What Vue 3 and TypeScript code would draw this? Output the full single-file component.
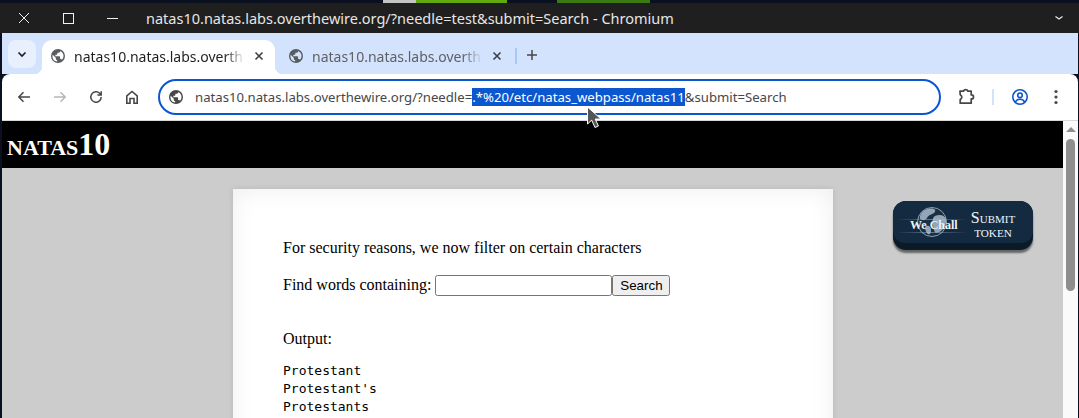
<template>
  <div class="screen">
    <div class="wall-grey"></div>
    <div class="wall-green"></div>
    <div class="wall-green-dark"></div>
    <div class="titlebar">
      <div class="win-buttons">
        <svg width="16" height="16" viewBox="0 0 16 16"><path d="M3 3l10 10M13 3L3 13" stroke="#f2f2f2" stroke-width="1" fill="none" /></svg>
        <svg width="16" height="16" viewBox="0 0 16 16"><rect x="3.500" y="3.500" width="10" height="10" stroke="#f2f2f2" stroke-width="1" fill="none" /></svg>
        <svg width="16" height="16" viewBox="0 0 16 16"><path d="M3 8.500h11" stroke="#f2f2f2" stroke-width="1" fill="none" /></svg>
      </div>
      <div class="win-title">natas10.natas.labs.overthewire.org/?needle=test&amp;submit=Search - Chromium</div>
      <svg class="win-chevron" width="12" height="12" viewBox="0 0 12 12"><path d="M2.500 4.500L6 7l3.500-2.500" stroke="#e8e8e8" stroke-width="1.300" fill="none" /></svg>
    </div>

    <div class="tabstrip">
      <div class="tab-menu">
        <svg width="12" height="12" viewBox="0 0 12 12"><path d="M2.500 4.500L6 8l3.500-3.500" stroke="#1f1f1f" stroke-width="1.700" fill="none" /></svg>
      </div>
      <div
        v-for="(tab, index) in tabs"
        :key="index"
        class="tab"
        :class="{ active: tab.active }"
      >
        <svg class="globe" width="14" height="14" viewBox="0 0 16 16"><path :d="globePath" fill="#5a5c60" /></svg>
        <span class="tab-text">{{ tab.title }}</span>
        <svg class="tab-close" width="10" height="10" viewBox="0 0 10 10"><path d="M1.500 1.500l7 7M8.500 1.500l-7 7" stroke="#3c4043" stroke-width="1.600" fill="none" /></svg>
      </div>
      <div class="tab-sep"></div>
      <svg class="tab-plus" width="12" height="12" viewBox="0 0 12 12"><path d="M6 1v10M1 6h10" stroke="#474747" stroke-width="1.500" fill="none" /></svg>
    </div>

    <div class="toolbar">
      <div class="nav-icons">
        <svg width="16" height="16" viewBox="0 0 16 16"><path d="M14 8H3M7.500 3.200L2.800 8l4.700 4.800" stroke="#474747" stroke-width="1.500" fill="none" /></svg>
        <svg width="16" height="16" viewBox="0 0 16 16"><path d="M2 8h11M8.500 3.200L13.200 8l-4.700 4.800" stroke="#b4b6ba" stroke-width="1.500" fill="none" /></svg>
        <svg width="16" height="16" viewBox="0 0 16 16"><path d="M13.200 8a5.200 5.200 0 1 1-1.500-3.700L13.200 6M13.200 2.200V6H9.400" stroke="#474747" stroke-width="1.500" fill="none" /></svg>
        <svg width="16" height="16" viewBox="0 0 16 16"><path d="M2.800 14.200V6.800L8 2.500l5.200 4.300v7.400H10V9.500H6v4.700z" stroke="#474747" stroke-width="1.600" fill="none" /></svg>
      </div>
      <div class="omnibox">
        <svg class="globe" width="14" height="14" viewBox="0 0 16 16"><path :d="globePath" fill="#474747" /></svg>
        <span class="url">natas10.natas.labs.overthewire.org/?needle=<span class="url-selected">.*%20/etc/natas_webpass/natas11</span>&amp;submit=Search</span>
      </div>
      <div class="tool-icons">
        <svg width="18" height="18" viewBox="0 0 18 18"><path d="M3 3.200h3.500a2.300 2.300 0 0 1 4.400 0h3.300v3.700h.3a2 2 0 0 1 0 4h-.3v4.300H3.200v-3.700a2.600 2.600 0 0 0 0-4.800z" stroke="#474747" stroke-width="1.700" fill="none" stroke-linejoin="round" /></svg>
        <div class="tool-sep"></div>
        <svg width="18" height="18" viewBox="0 0 18 18"><circle cx="9" cy="9" r="7.200" stroke="#0b57d0" stroke-width="1.600" fill="none" /><circle cx="9" cy="7.300" r="2.300" stroke="#0b57d0" stroke-width="1.600" fill="none" /><path d="M4.500 14c1-2.400 2.800-2.800 4.500-2.800s3.500.4 4.500 2.800" stroke="#0b57d0" stroke-width="1.600" fill="none" /></svg>
        <svg width="14" height="16" viewBox="0 0 14 16"><circle cx="7" cy="2.500" r="1.600" fill="#474747" /><circle cx="7" cy="8" r="1.600" fill="#474747" /><circle cx="7" cy="13.500" r="1.600" fill="#474747" /></svg>
      </div>
    </div>

    <div class="viewport">
      <div class="page">
        <div class="page-head">
          <h1 class="natas-title">natas<span class="natas-num">10</span></h1>
        </div>
        <div class="page-body">
          <div class="content">
            <p class="line">For security reasons, we now filter on certain characters</p>
            <div class="form-row">
              <span>Find words containing:</span>
              <span class="fake-input"></span><span class="fake-button">Search</span>
            </div>
            <p class="line output">Output:</p>
            <pre class="words">{{ words.join('\n') }}</pre>
          </div>
          <div class="wechall">
            <div class="wechall-face">
              <div class="wechall-logo">
                <svg class="wechall-globe" width="32" height="32" viewBox="0 0 32 32">
                  <circle cx="16" cy="16" r="14.500" fill="#1d3247" stroke="#b4c3d0" stroke-width="0.900" />
                  <path d="M9 4c4-2 9-2 10 0s-2 4-5 5-3 5-6 5-5-1-4-4 2-4 5-6zM19 10c4-2 10-1 11 3s-2 10-5 12-6 3-7-1-3-12 1-14zM10 20c3-1 5 1 5 4s-1 5-3 4-4-7-2-8z" fill="#a9bccd" />
                </svg>
                <div class="streak streak-a"></div>
                <div class="streak streak-b"></div>
                <span class="wechall-name">We Chall</span>
              </div>
              <div class="wechall-action">
                <span class="action-top">Submit</span>
                <span class="action-bottom">token</span>
              </div>
            </div>
          </div>
        </div>
      </div>
      <div class="scrollbar">
        <div class="scroll-arrow"></div>
        <div class="scroll-thumb"></div>
      </div>
    </div>

    <svg class="cursor" width="16" height="23" viewBox="0 0 16 23">
      <path d="M1.500 1v17l4.200-3.800 3.300 7.300 3.400-1.500-3.200-7h5.800z" fill="#555" stroke="#fff" stroke-width="1" />
    </svg>
  </div>
</template>

<script setup lang="ts">
interface Tab {
  title: string
  active: boolean
}

const tabs: Tab[] = [
  { title: 'natas10.natas.labs.overth', active: true },
  { title: 'natas10.natas.labs.overth', active: false }
]

const words: string[] = ['Protestant', "Protestant's", 'Protestants']

const globePath =
  'M8 0a8 8 0 1 0 0 16A8 8 0 0 0 8 0zM1.700 8c0-.5.100-1 .200-1.500L5.500 10v1c0 .8.700 1.500 1.500 1.500v1.900A6.300 6.300 0 0 1 1.700 8zm10.900 4.300c-.2-.6-.8-1-1.400-1h-.8V9c0-.4-.4-.8-.8-.8H5v-1.600h1.500c.4 0 .8-.4.800-.8V4.200h1.600c.9 0 1.600-.7 1.600-1.600v-.4a6.300 6.300 0 0 1 2.100 10.100z'
</script>

<style scoped>
.screen {
  position: relative;
  width: 1079px;
  height: 418px;
  overflow: hidden;
  background: #0b1020;
  font-family: "Noto Sans", sans-serif;
  padding: 3px 1px 0 2px;
  box-sizing: border-box;
}

.wall-grey {
  position: absolute;
  top: 0;
  left: 383px;
  width: 33px;
  height: 3px;
  background: #c4c4c4;
}

.wall-green {
  position: absolute;
  top: 0;
  left: 416px;
  width: 91px;
  height: 3px;
  background: #62a90f;
}

.wall-green-dark {
  position: absolute;
  top: 0;
  left: 557px;
  width: 93px;
  height: 3px;
  background: #3a7a10;
}

.titlebar {
  display: flex;
  align-items: center;
  height: 30px;
  margin-left: -2px;
  margin-right: -1px;
  background: #1f1f1f;
  color: #e6e6e6;
  padding: 0 14px 0 16px;
}

.win-buttons {
  display: flex;
  gap: 28px;
  width: 130px;
  flex: none;
}

.win-title {
  flex: 1;
  font-size: 14.500px;
  white-space: nowrap;
}

.tabstrip {
  display: flex;
  align-items: flex-end;
  height: 41px;
  background: #d3e3fd;
  padding-left: 6px;
  box-sizing: border-box;
}

.tab-menu {
  display: flex;
  align-items: center;
  justify-content: center;
  width: 28px;
  height: 28px;
  margin: 0 6px 6px 0;
  background: #e9f0fd;
  border-radius: 8px;
}

.tab {
  position: relative;
  display: flex;
  align-items: center;
  width: 233px;
  height: 34px;
  box-sizing: border-box;
  padding: 0 11px 2px 9px;
  border-radius: 10px 10px 0 0;
  margin-right: 5px;
  color: #5f6163;
  font-size: 14px;
}

.tab.active {
  background: #fff;
  color: #1f1f1f;
}

.tab.active::before,
.tab.active::after {
  content: "";
  position: absolute;
  bottom: 0;
  width: 8px;
  height: 8px;
}

.tab.active::before {
  left: -8px;
  background: radial-gradient(circle at 0 0, transparent 8px, #fff 8.500px);
}

.tab.active::after {
  right: -8px;
  background: radial-gradient(circle at 100% 0, transparent 8px, #fff 8.500px);
}

.tab-text {
  flex: 1;
  margin-left: 9px;
  overflow: hidden;
  white-space: nowrap;
  -webkit-mask-image: linear-gradient(to right, #000 88%, transparent);
  mask-image: linear-gradient(to right, #000 88%, transparent);
}

.tab-close {
  margin-left: 9px;
  flex: none;
}

.tab-sep {
  width: 2px;
  height: 16px;
  background: #a8c7fa;
  margin: 0 0 10px -3px;
}

.tab-plus {
  margin: 0 0 13px 9px;
}

.toolbar {
  display: flex;
  align-items: center;
  height: 47px;
  background: #fff;
  border-bottom: 1px solid #d8d8d8;
  border-radius: 8px 8px 0 0;
  box-sizing: border-box;
  padding: 0 0 1px 14px;
}

.nav-icons {
  display: flex;
  gap: 20px;
  flex: none;
  width: 142px;
}

.omnibox {
  display: flex;
  align-items: center;
  width: 783px;
  height: 36px;
  border: 2px solid #0b57d0;
  border-radius: 18px;
  box-sizing: border-box;
  padding-left: 9px;
  flex: none;
}

.url {
  margin-left: 12px;
  font-size: 13.160px;
  line-height: 18px;
  color: #474747;
  white-space: nowrap;
}

.url-selected {
  background: #0b57d0;
  color: #fff;
}

.tool-icons {
  display: flex;
  align-items: center;
  margin-left: 16px;
}

.tool-sep {
  width: 2px;
  height: 16px;
  background: #d3e3fd;
  margin: 0 17px;
}

.tool-icons svg:last-child {
  margin-left: 20px;
}

.viewport {
  display: flex;
  height: 297px;
}

.page {
  flex: 1;
  background: #ccc;
  overflow: hidden;
  font-family: "Liberation Serif", serif;
  font-size: 16px;
  color: #000;
}

.page-head {
  height: 47px;
  background: #000;
  color: #fff;
  box-sizing: border-box;
  padding: 5px 0 0 5px;
}

.natas-title {
  margin: 0;
  font-size: 32px;
  font-weight: bold;
  font-variant: small-caps;
  line-height: 36px;
}

.natas-num {
  font-variant: normal;
}

.page-body {
  position: relative;
  height: 250px;
}

.content {
  position: absolute;
  top: 21px;
  left: 231px;
  width: 600px;
  height: 300px;
  background: #fff;
  box-shadow: inset 0 0 24px rgba(0, 0, 0, 0.07), 0 0 6px rgba(0, 0, 0, 0.1);
  box-sizing: border-box;
  padding: 50px 50px 0;
}

.line {
  margin: 0;
  line-height: 18px;
}

.form-row {
  display: flex;
  align-items: center;
  margin-top: 17px;
  height: 22px;
}

.fake-input {
  width: 177px;
  height: 21px;
  box-sizing: border-box;
  margin-left: 4px;
  background: #fff;
  border: 1px solid #767676;
  border-radius: 2.500px;
}

.fake-button {
  display: flex;
  align-items: center;
  justify-content: center;
  width: 58px;
  height: 21px;
  box-sizing: border-box;
  background: #efefef;
  border: 1px solid #767676;
  border-radius: 2.500px;
  font-family: "Liberation Sans", sans-serif;
  font-size: 13.333px;
}

.output {
  margin-top: 34px;
}

.words {
  margin: 14px 0 0;
  font-family: "DejaVu Sans Mono", monospace;
  font-size: 13px;
  line-height: 18px;
}

.wechall {
  position: absolute;
  left: 891px;
  top: 33px;
  width: 140px;
  height: 49px;
  border-radius: 13px;
  background: #0a1a26;
  box-shadow: 0 3px 2px rgba(0, 0, 0, 0.5);
}

.wechall-face {
  display: flex;
  height: 42px;
  border-radius: 13px 13px 12px 12px;
  background: #142a40;
}

.wechall-logo {
  position: relative;
  display: flex;
  align-items: center;
  justify-content: center;
  flex: none;
  width: 78px;
  height: 42px;
}

.wechall-globe {
  opacity: 0.85;
}

.streak {
  position: absolute;
  left: 4px;
  right: 4px;
  height: 1px;
  background: linear-gradient(to right, transparent, rgba(170, 200, 225, 0.5), transparent);
}

.streak-a {
  top: 18px;
}

.streak-b {
  top: 31px;
}

.wechall-name {
  position: absolute;
  left: 17px;
  top: 17px;
  font-size: 12px;
  line-height: 15px;
  font-weight: bold;
  color: #eef3f7;
  white-space: nowrap;
}

.wechall-action {
  display: flex;
  flex-direction: column;
  align-items: center;
  width: 48px;
  margin-left: -2px;
  color: #eef4fa;
  padding-top: 8px;
}

.action-top {
  font-size: 16px;
  line-height: 18px;
  font-variant: small-caps;
}

.action-bottom {
  font-size: 11.200px;
  line-height: 13px;
  text-transform: uppercase;
}

.scrollbar {
  flex: none;
  width: 15px;
  background: #fafafa;
}

.scroll-arrow {
  width: 0;
  height: 0;
  margin: 6px auto 0;
  border-left: 5px solid transparent;
  border-right: 5px solid transparent;
  border-bottom: 5px solid #8e8e8e;
}

.scroll-thumb {
  width: 9px;
  height: 152px;
  margin: 7px auto 0;
  background: #8e8e8e;
  border-radius: 5px;
}

.cursor {
  position: absolute;
  left: 586px;
  top: 106px;
}
</style>
